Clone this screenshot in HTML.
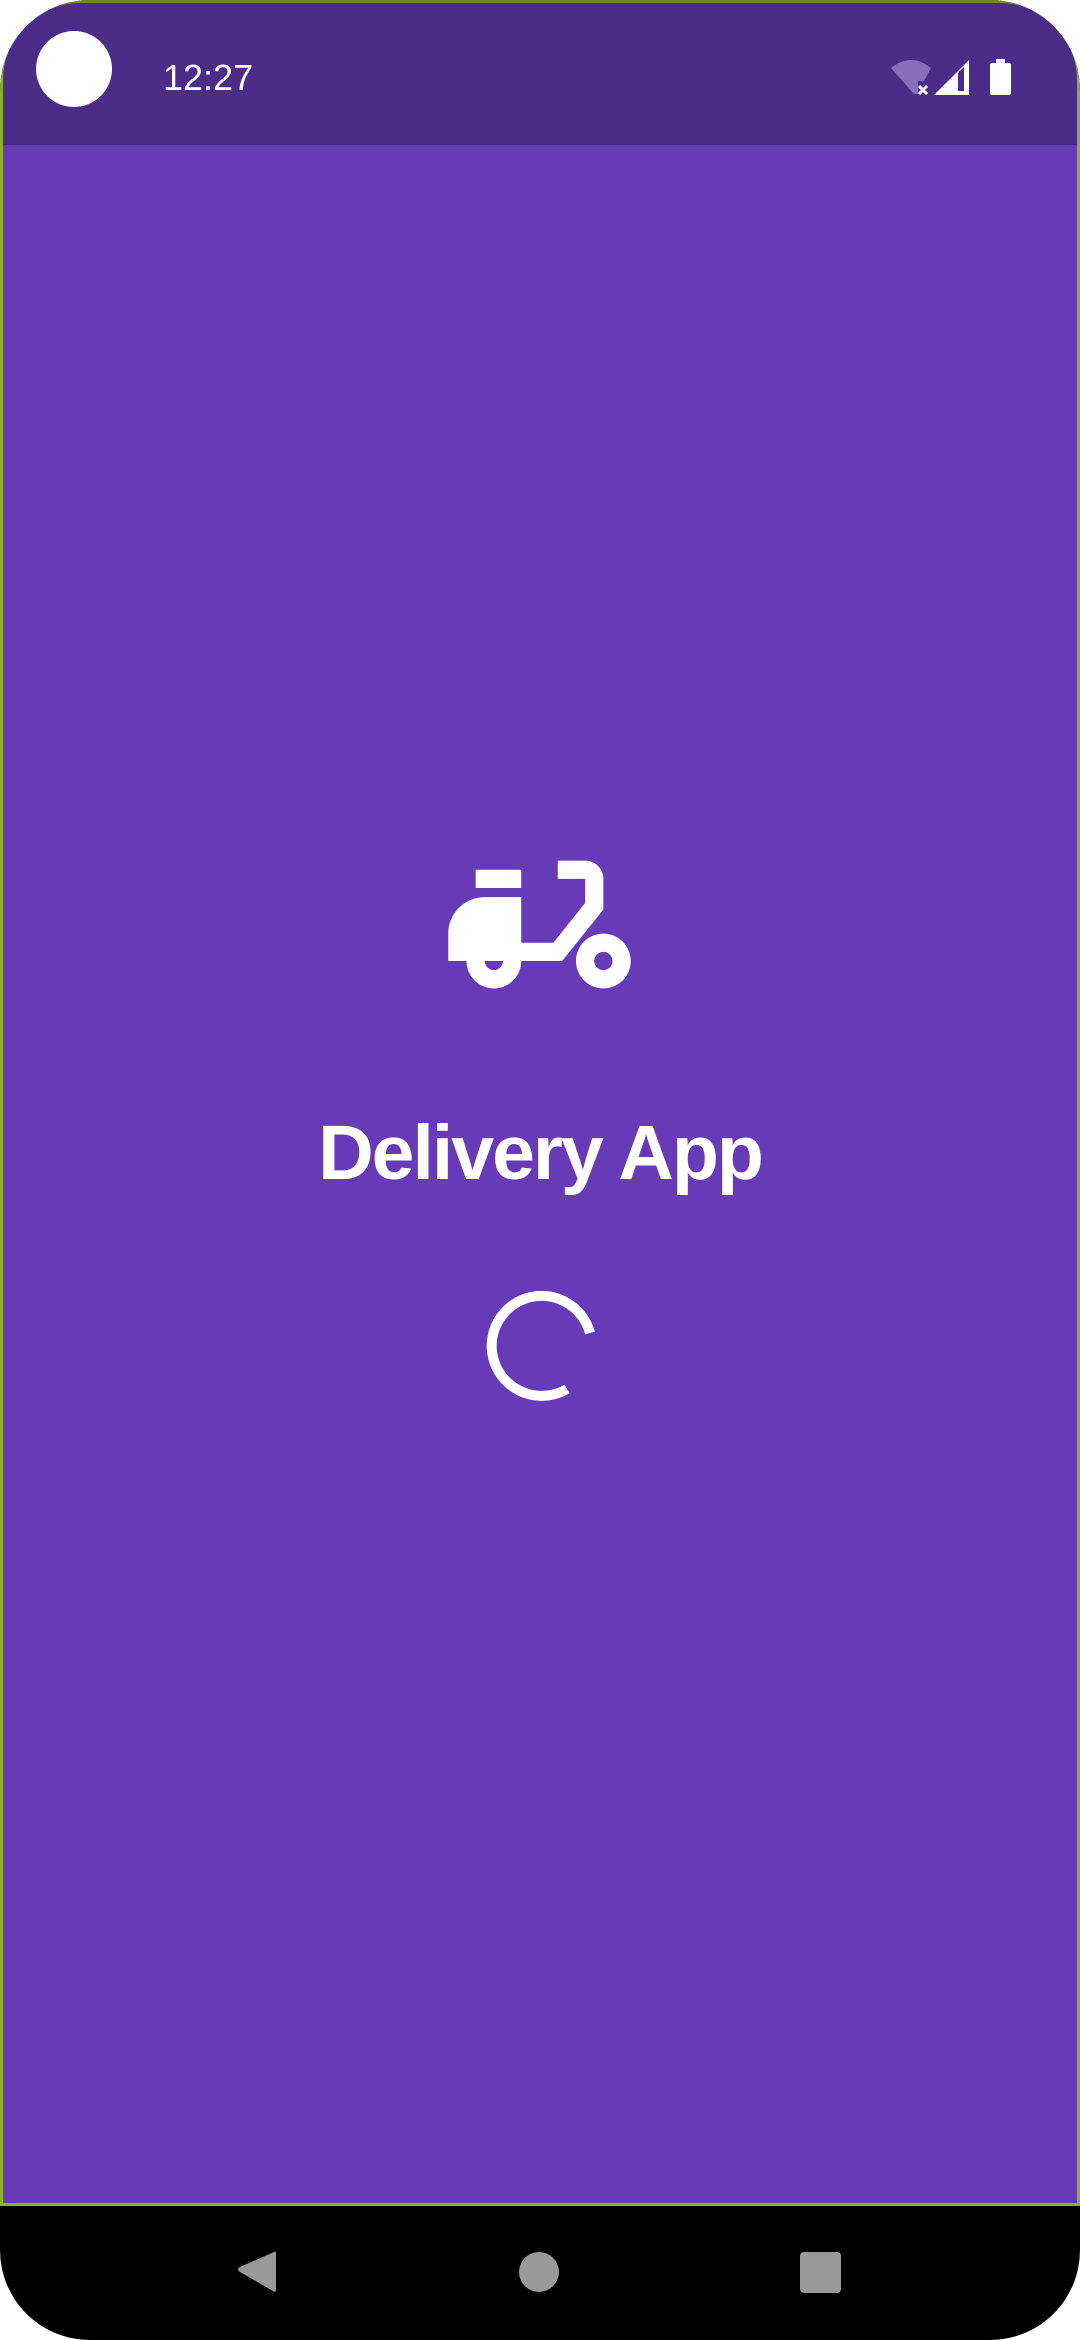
<!DOCTYPE html>
<html><head><meta charset="utf-8"><style>
*{margin:0;padding:0;box-sizing:border-box}
html,body{width:1080px;height:2340px;background:#fff;overflow:hidden}
.phone{position:absolute;left:0;top:0;width:1080px;height:2340px;background:#000;border-radius:90px 90px 90px 90px;overflow:hidden}
.app{position:absolute;left:0;top:0;width:1080px;height:2206px;background:#673ab7;border:3px solid #8fb02a;border-top-color:#6e8a22;border-radius:80px 80px 0 0;overflow:hidden}
.status{position:absolute;left:0;top:0;width:1080px;height:142px;background:#4b2c89}
.time{position:absolute;left:160px;top:54px;font:36px "Liberation Sans",sans-serif;color:#fff;letter-spacing:0px}
.title{position:absolute;left:0;width:1074px;top:1111px;height:78px;line-height:78px;text-align:center;font:bold 77px/78px "Liberation Sans",sans-serif;letter-spacing:-2px;color:#fff}
</style></head><body>
<div class="phone">
<div class="app">
  <div class="status">
    <div style="position:absolute;left:33px;top:28px;width:76px;height:76px;border-radius:50%;background:#fff"></div>
    <div class="time">12:27</div>
    <svg style="position:absolute;left:883px;top:53px" width="140" height="44" viewBox="0 0 140 44">
      <path d="M5 12 Q25 -4 45 12 L38 25 L32 25 L32 38 L28 38 Z" fill="#8a6fb8"/>
      <path d="M33 30 L41 38 M41 30 L33 38" stroke="#fff" stroke-width="3"/>
      <path d="M48 39 L83 4 L83 39 Z" fill="#fff"/>
      <path d="M72 17 L78 11 L78 35 L72 35 Z" fill="#4b2c89"/>
      <rect x="104" y="7" width="21" height="32" rx="2" fill="#fff"/>
      <rect x="110" y="3" width="9" height="5" fill="#fff"/>
    </svg>
  </div>
  <svg style="position:absolute;left:427px;top:812px" width="219" height="219" viewBox="0 0 24 24">
    <path fill="#fff" d="M19 7c0-1.1-.9-2-2-2h-3v2h3v2.65L13.52 14H10V9H6c-2.21 0-4 1.790-4 4v3h2c0 1.66 1.34 3 3 3s3-1.34 3-3h4.48L19 10.35V7zM7 17c-.55 0-1-.45-1-1h2c0 .55-.45 1-1 1zM5 6h5v2H5zM19 13c-1.66 0-3 1.34-3 3s1.34 3 3 3 3-1.34 3-3-1.34-3-3-3zm0 4c-.55 0-1-.45-1-1s.45-1 1-1 1 .45 1 1-.45 1-1 1z"/>
  </svg>
  <div class="title">Delivery App</div>
  <svg style="position:absolute;left:478px;top:1288px" width="120" height="112" viewBox="0 0 120 112">
    <path d="M109 42 A50 50 0 1 0 86 98" fill="none" stroke="#fff" stroke-width="10"/>
  </svg>
</div>
<svg style="position:absolute;left:0;top:2206px" width="1080" height="134" viewBox="0 0 1080 134">
  <path d="M274 46 Q276 44 276 48 L276 83 Q276 87 273 85 L240 66 Q236 63 240 61 Z" fill="#999"/>
  <circle cx="539" cy="66" r="20" fill="#999"/>
  <rect x="800" y="46" width="41" height="41" rx="4" fill="#999"/>
</svg>
</div>
</body></html>
